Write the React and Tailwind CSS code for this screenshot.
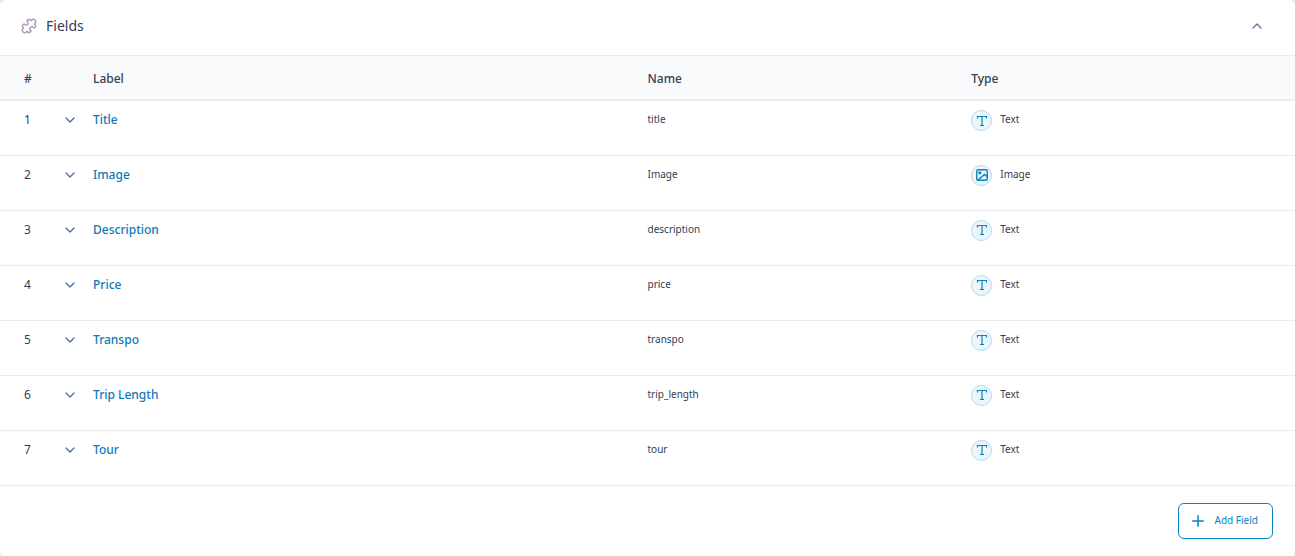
import React from 'react';
import { ChevronDown, ChevronUp, Plus } from 'lucide-react';

const fields = [
  { label: 'Title', name: 'title', type: 'Text' },
  { label: 'Image', name: 'Image', type: 'Image' },
  { label: 'Description', name: 'description', type: 'Text' },
  { label: 'Price', name: 'price', type: 'Text' },
  { label: 'Transpo', name: 'transpo', type: 'Text' },
  { label: 'Trip Length', name: 'trip_length', type: 'Text' },
  { label: 'Tour', name: 'tour', type: 'Text' }
];

function PuzzleGlyph() {
  return (
    <svg viewBox="0 0 18 18" className="w-[18px] h-[18px] text-[#b29dbc]" fill="none" stroke="currentColor" strokeWidth="1.5" strokeLinejoin="round">
      <path d="M8.2 2.6Q9 1.8 9.8 2.6L10.6 3.4C11 3.8 11.5 3.6 11.6 3A2.1 2.1 0 1 1 15 6.4C14.4 6.5 14.2 7 14.6 7.4L15.4 8.2Q16.2 9 15.4 9.8L14.4 10.8C14 11.2 13.6 11 13.4 10.5A1.9 1.9 0 1 0 10.5 13.4C11 13.6 11.2 14 10.8 14.4L9.8 15.4Q9 16.2 8.2 15.4L7.4 14.6C7 14.2 6.5 14.4 6.4 15A2.1 2.1 0 1 1 3 11.6C3.6 11.5 3.8 11 3.4 10.6L2.6 9.8Q1.8 9 2.6 8.2L3.6 7.2C4 6.8 4.4 7 4.6 7.5A1.9 1.9 0 1 0 7.5 4.6C7 4.4 6.8 4 7.2 3.6Z" />
    </svg>
  );
}

function TextGlyph() {
  return (
    <svg viewBox="0 0 12 12" className="w-3 h-3" fill="none" stroke="currentColor" strokeWidth="1.2">
      <path d="M1.5 3.5V1.5h9v2M6 1.5v9M4 10.5h4" />
    </svg>
  );
}

function ImageGlyph() {
  return (
    <svg viewBox="0 0 12 12" className="w-3 h-3" fill="none" stroke="currentColor" strokeWidth="1.4">
      <rect x="0.7" y="0.7" width="10.6" height="10.6" rx="1.5" />
      <circle cx="3.8" cy="3.8" r="0.9" />
      <path d="M2 11l6.5-5.5 3 2.5" />
    </svg>
  );
}

function FieldRow({ field, index }) {
  return (
    <tr className="h-[55px] border-b border-[#eaecf0] align-top">
      <td className="pl-6 pt-2 text-xs leading-[22px]">{index + 1}</td>
      <td className="pl-[10px] pt-[11px]">
        <button type="button" aria-label={`Expand ${field.label}`} className="block text-[#506aa8]">
          <ChevronDown className="w-4 h-4" />
        </button>
      </td>
      <td className="pt-2 text-xs leading-[22px] font-medium">
        <a href="#" className="text-[#0c7ab8]">{field.label}</a>
      </td>
      <td className="pt-2 text-[10px] leading-5">{field.name}</td>
      <td className="pt-2 text-[10px] leading-5">
        <div className="flex items-start gap-2">
          <span className="mt-px flex w-[21px] h-[21px] items-center justify-center rounded-full border border-[#b5d9ec] bg-[#ebf5fa] text-[#0783be]">
            {field.type === 'Image' ? <ImageGlyph /> : <TextGlyph />}
          </span>
          {field.type}
        </div>
      </td>
    </tr>
  );
}

function App() {
  return (
    <div className="bg-[#eaecf0]">
      <section className="rounded-md bg-white font-['Noto_Sans','Open_Sans',sans-serif] text-[#344054]">
        <header className="flex h-14 items-center justify-between border-b border-[#eaecf0] pb-[3px] pl-5 pr-[30px]">
          <h2 className="flex items-center gap-2 text-sm leading-5">
            <PuzzleGlyph />
            Fields
          </h2>
          <button type="button" aria-label="Collapse fields" className="text-[#6b6fa8]">
            <ChevronUp className="w-4 h-4" />
          </button>
        </header>

        <table className="w-full table-fixed border-collapse text-left">
          <thead>
            <tr className="h-11 border-b-2 border-[#eaecf0] bg-[#f9fafb] text-xs leading-[22px]">
              <th className="w-[52px] pt-0.5 pl-6 font-medium">#</th>
              <th className="w-[41px]" aria-label="Toggle" />
              <th className="pt-0.5 font-medium">Label</th>
              <th className="w-1/4 pt-0.5 font-medium">Name</th>
              <th className="w-1/4 pt-0.5 font-medium">Type</th>
            </tr>
          </thead>
          <tbody>
            {fields.map((field, index) => (
              <FieldRow key={field.label} field={field} index={index} />
            ))}
          </tbody>
        </table>

        <footer className="flex justify-end px-[22px] pt-[17px] pb-[18px]">
          <button
            type="button"
            className="flex h-9 items-center gap-2 rounded-md border border-[#0783be] pr-3.5 pl-2.5 text-[10px] text-[#0783be]"
          >
            <Plus className="w-[18px] h-[18px]" strokeWidth={2} />
            Add Field
          </button>
        </footer>
      </section>
    </div>
  );
}

export default App;
